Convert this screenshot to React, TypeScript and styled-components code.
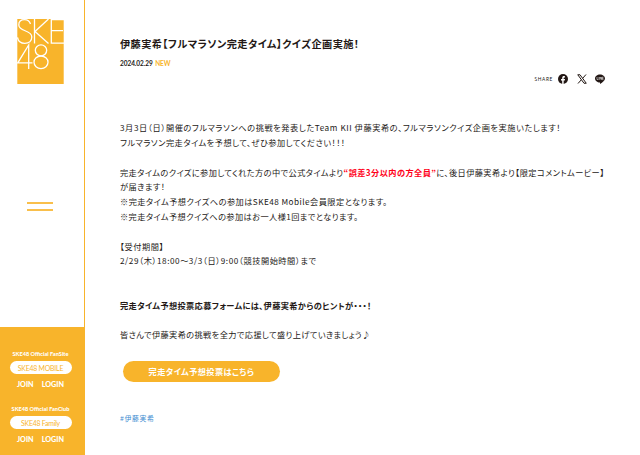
import React from "react";
import styled, { createGlobalStyle } from "styled-components";

const ACCENT = "#f8b42b";
const INK = "#231815";

const GlobalStyle = createGlobalStyle`
  * { box-sizing: border-box; }
  body { margin: 0; background: #fff; color: ${INK}; overflow: hidden; }
`;

const Page = styled.div`
  display: flex;
  width: 640px;
  height: 455px;
  font-family: "Noto Sans CJK JP", sans-serif;
  font-feature-settings: "palt";
`;

const Sidebar = styled.aside`
  display: flex;
  flex-direction: column;
  align-items: center;
  width: 85px;
  flex: none;
  border-right: 1px solid ${ACCENT};
  padding-top: 19px;
`;

const Logo = styled.svg`
  display: block;
  width: 47px;
  height: 65px;
  margin-right: 3px;
`;

const MenuButton = styled.button`
  display: flex;
  flex-direction: column;
  justify-content: space-between;
  width: 26px;
  height: 9px;
  margin: 118px 4px 0 0;
  padding: 0;
  border: 0;
  background: none;
`;

const MenuBar = styled.span`
  height: 2px;
  background: ${ACCENT};
  opacity: 0.85;
`;

const Membership = styled.div`
  display: flex;
  flex-direction: column;
  align-items: center;
  width: 84px;
  height: 128px;
  margin-top: auto;
  padding: 22px 3px 0 0;
  background: ${ACCENT};
  color: #fff;
  font-family: Lato, sans-serif;
  white-space: nowrap;
`;

const Club = styled.section`
  display: flex;
  flex-direction: column;
  align-items: center;
  flex: none;
  height: 55px;
`;

const ClubLabel = styled.div`
  font-size: 5.6px;
  font-weight: 900;
  line-height: 10px;
`;

const ClubPill = styled.a`
  width: 62px;
  height: 13px;
  margin-top: 2px;
  border-radius: 7px;
  background: #fff;
  color: ${ACCENT};
  font-size: 6.9px;
  line-height: 14px;
  letter-spacing: -0.2px;
  text-align: center;
`;

const ClubLinks = styled.div`
  display: flex;
  gap: 8px;
  margin-top: 5px;
  font-size: 7.2px;
  font-weight: 900;
  line-height: 11px;
`;

const Main = styled.main`
  display: flex;
  flex-direction: column;
  align-items: flex-start;
  flex: 1;
  padding: 36px 0 0 35px;
  white-space: nowrap;
`;

const Title = styled.h1`
  margin: 0;
  font-size: 10.2px;
  font-weight: 700;
  line-height: 16px;
  letter-spacing: 0.43px;
`;

const Meta = styled.div`
  display: flex;
  gap: 2.5px;
  margin-top: 6px;
  font: 700 6.5px/11px Lato, sans-serif;
  letter-spacing: -0.06px;
`;

const NewMark = styled.span`
  color: ${ACCENT};
`;

const Share = styled.div`
  display: flex;
  align-items: center;
  align-self: flex-end;
  height: 12px;
  margin: 4px 35.5px 0 0;
  font: 400 4.8px/12px Lato, sans-serif;
  letter-spacing: 0.65px;
`;

const ShareIcon = styled.svg<{ $gap: number }>`
  width: 10px;
  height: 10px;
  margin-left: ${(p) => p.$gap}px;
`;

const Article = styled.article`
  margin-top: 35.2px;
  font-size: 8.2px;
  line-height: 14.8px;
`;

const Line = styled.p<{ $track?: number; $bold?: boolean }>`
  width: max-content;
  height: 14.8px;
  margin: 0;
  font-weight: ${(p) => (p.$bold ? 700 : 400)};
  letter-spacing: ${(p) => p.$track ?? 0.5}px;
`;

const Red = styled.strong`
  color: #ff0019;
  font-weight: 700;
`;

const VoteButton = styled.a`
  display: block;
  width: 157px;
  height: 21px;
  margin: 18.9px 0 0 3px;
  border-radius: 11px;
  background: ${ACCENT};
  color: #fff;
  font-size: 8.2px;
  font-weight: 700;
  line-height: 20px;
  letter-spacing: 0.4px;
  text-align: center;
`;

const Tag = styled.a`
  margin-top: 30px;
  color: #3b8bd0;
  font-size: 6.9px;
  line-height: 12px;
  letter-spacing: 0.65px;
`;

export default function App() {
  return (
    <Page>
      <GlobalStyle />
      <Sidebar>
        <Logo viewBox="0 0 47 65" aria-label="SKE48">
          <rect x="0.3" width="46.4" height="65" fill={ACCENT} />
          <g fill="none" stroke="#fff" strokeWidth="1.3">
            <path d="M13.500 5C12.500 1.800 10.500.7 7.500.7 3.800.7 1.800 3 1.800 6c0 7 13 4.500 13 12 0 4-3 6.300-7 6.300-4.200 0-6.700-2.300-7.300-6" />
            <path d="M17.500 0v24.500M31.500 0 18 12.500 31.500 24.500M47 .7H34.300v23.500H47M34.300 11.700H46" />
            <path d="M11.700 50V26L.8 43.800H15.500" />
            <ellipse cx="24" cy="31.300" rx="5.700" ry="5.500" />
            <ellipse cx="24" cy="43.300" rx="7" ry="6.300" />
          </g>
        </Logo>
        <MenuButton aria-label="menu">
          <MenuBar />
          <MenuBar />
        </MenuButton>
        <Membership>
          <Club>
            <ClubLabel>SKE48 Official FanSite</ClubLabel>
            <ClubPill>SKE48 MOBILE</ClubPill>
            <ClubLinks>
              <span>JOIN</span>
              <span>LOGIN</span>
            </ClubLinks>
          </Club>
          <Club>
            <ClubLabel>SKE48 Official FanClub</ClubLabel>
            <ClubPill>SKE48 Family</ClubPill>
            <ClubLinks>
              <span>JOIN</span>
              <span>LOGIN</span>
            </ClubLinks>
          </Club>
        </Membership>
      </Sidebar>
      <Main>
        <Title>伊藤実希【フルマラソン完走タイム】クイズ企画実施！</Title>
        <Meta>
          <span>2024.02.29</span>
          <NewMark>NEW</NewMark>
        </Meta>
        <Share>
          SHARE
          <ShareIcon viewBox="0 0 20 20" $gap={5}>
            <circle cx="10" cy="10" r="10" fill={INK} />
            <path d="M8.400 20v-7H6v-3h2.400V8c0-2.500 1.400-3.800 3.600-3.800l2 .2v2.500h-1.200c-1.100 0-1.500.7-1.500 1.400V10H14l-.4 3h-2.300v7z" fill="#fff" />
          </ShareIcon>
          <ShareIcon viewBox="0 0 20 20" $gap={8.5}>
            <path d="M1.500 1.500h4.500l12.500 17H14z" fill="none" stroke={INK} strokeWidth="2" />
            <path d="M18 1 11.300 8.700M8.600 11.600 2 19" stroke={INK} strokeWidth="2" />
          </ShareIcon>
          <ShareIcon viewBox="0 0 20 20" $gap={8}>
            <path d="M10 .8c5.600 0 10 3.500 10 8 0 4-4.500 7.500-10 11v-3C4.400 16.800 0 13.300 0 8.800S4.400.8 10 .8z" fill={INK} />
            <path d="M4 6v5h2.500M8 6v5.500M10 11.500V6l3 5V6M17 6.300h-2.200v5H17M14.800 8.700H17" fill="none" stroke="#fff" strokeWidth="1.100" />
          </ShareIcon>
        </Share>
        <Article>
          <Line $track={0.58}>3月3日（日）開催のフルマラソンへの挑戦を発表したTeam KII 伊藤実希の、フルマラソンクイズ企画を実施いたします！</Line>
          <Line>フルマラソン完走タイムを予想して、ぜひ参加してください！！！</Line>
          <Line />
          <Line $track={0.42}>
            完走タイムのクイズに参加してくれた方の中で公式タイムより<Red>“誤差3分以内の方全員”</Red>に、後日伊藤実希より【限定コメントムービー】
          </Line>
          <Line>が届きます！</Line>
          <Line $track={0.46}>※完走タイム予想クイズへの参加はSKE48 Mobile会員限定となります。</Line>
          <Line $track={0.42}>※完走タイム予想クイズへの参加はお一人様1回までとなります。</Line>
          <Line />
          <Line>【受付期間】</Line>
          <Line $track={0.54}>2/29（木）18:00〜3/3（日）9:00（競技開始時間）まで</Line>
          <Line />
          <Line />
          <Line $bold $track={0.37}>完走タイム予想投票応募フォームには、伊藤実希からのヒントが・・・！</Line>
          <Line />
          <Line $track={0.4}>皆さんで伊藤実希の挑戦を全力で応援して盛り上げていきましょう♪</Line>
        </Article>
        <VoteButton>完走タイム予想投票はこちら</VoteButton>
        <Tag>#伊藤実希</Tag>
      </Main>
    </Page>
  );
}
